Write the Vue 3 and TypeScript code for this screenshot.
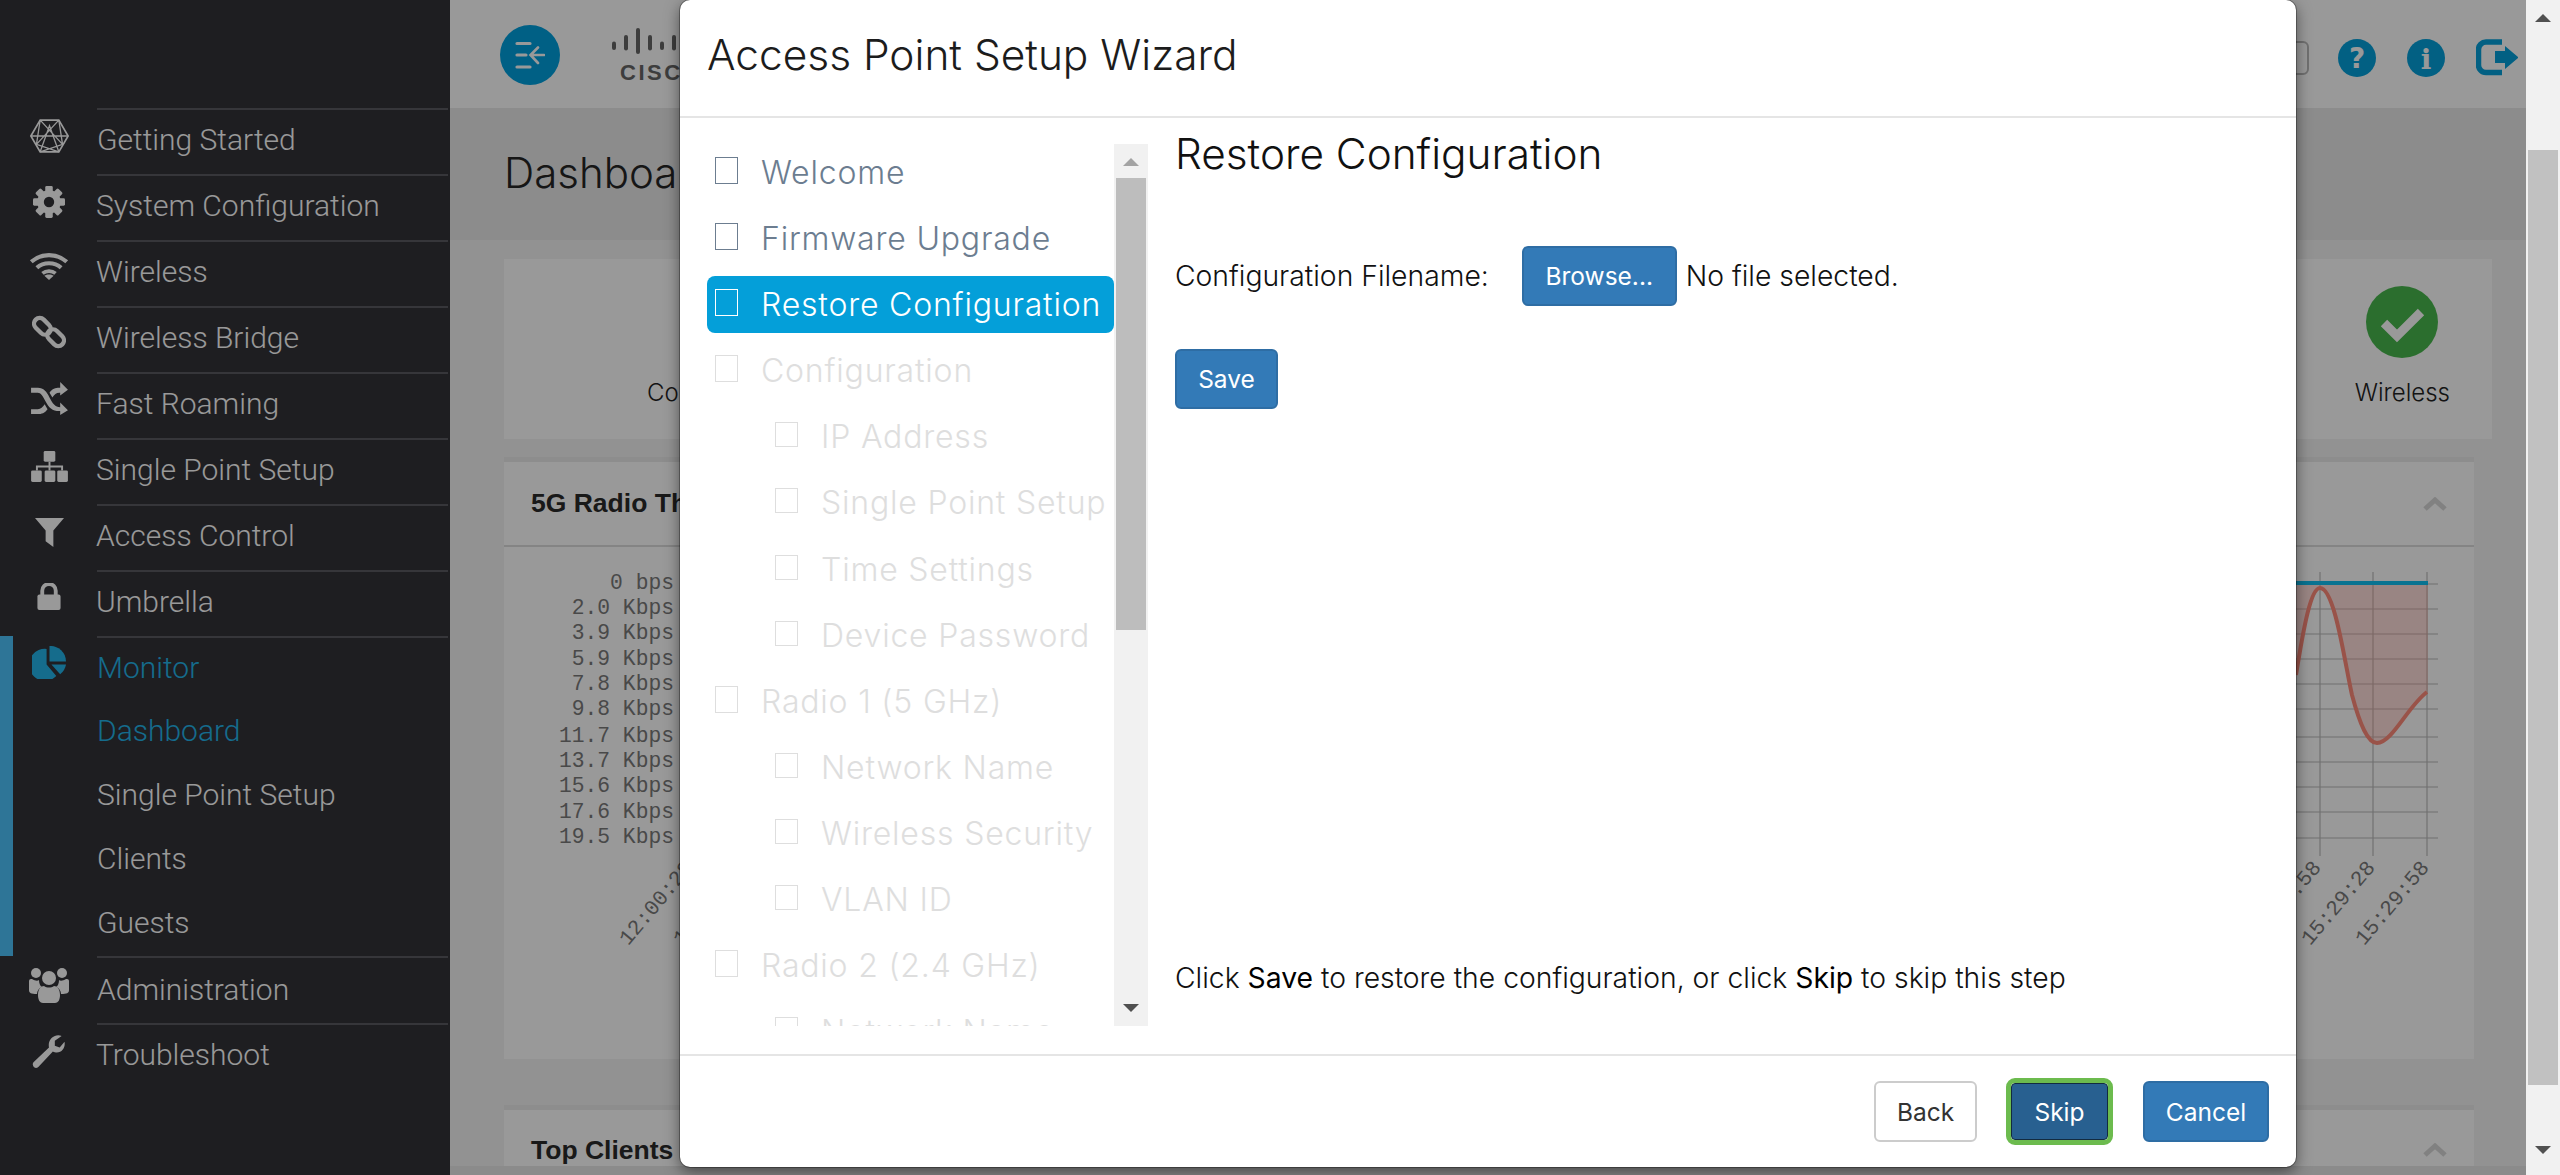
<script setup lang="ts">
const steps: { label: string; state: string; child?: boolean }[] = [
  { label: 'Welcome', state: 'done' },
  { label: 'Firmware Upgrade', state: 'done' },
  { label: 'Restore Configuration', state: 'active' },
  { label: 'Configuration', state: 'off' },
  { label: 'IP Address', state: 'off', child: true },
  { label: 'Single Point Setup', state: 'off', child: true },
  { label: 'Time Settings', state: 'off', child: true },
  { label: 'Device Password', state: 'off', child: true },
  { label: 'Radio 1 (5 GHz)', state: 'off' },
  { label: 'Network Name', state: 'off', child: true },
  { label: 'Wireless Security', state: 'off', child: true },
  { label: 'VLAN ID', state: 'off', child: true },
  { label: 'Radio 2 (2.4 GHz)', state: 'off' },
  { label: 'Network Name', state: 'off', child: true },
]
const subItems = [
  { label: 'Dashboard', active: true },
  { label: 'Single Point Setup', active: false },
  { label: 'Clients', active: false },
  { label: 'Guests', active: false },
]
const yLabels = [
  ['0 bps', 589], ['2.0 Kbps', 614], ['3.9 Kbps', 639], ['5.9 Kbps', 665], ['7.8 Kbps', 690], ['9.8 Kbps', 715],
  ['11.7 Kbps', 742], ['13.7 Kbps', 767], ['15.6 Kbps', 792], ['17.6 Kbps', 818], ['19.5 Kbps', 843],
] as [string, number][]
const hLines = [584, 609, 634, 659, 684, 709, 737, 762, 787, 812, 838]
const vLines = [2320, 2373, 2427]
const xLabels = [
  ['12:00:28', 694], ['12:00:58', 748], ['15:28:58', 2322], ['15:29:28', 2376], ['15:29:58', 2430],
] as [string, number][]
</script>

<template>
  <div class="app">
    <aside class="sidebar">
      <div class="nav-row">
        <span class="nav-icon">
          <svg width="41" height="36" viewBox="0 0 44 38" fill="none" stroke="#fff" stroke-width="1.4">
            <path d="M2 19 12 2h20l10 17-10 17H12z" stroke-width="1.8" />
            <path d="M12 2 36 28M32 2 8 28M2 19h40M12 36 22 8l10 28M12 2l-4 26 24 8M32 2l4 26-24 8" />
          </svg>
        </span>
        <span class="nav-text">Getting Started</span>
      </div>
      <div class="nav-row">
        <span class="nav-icon">
          <svg width="32" height="32" viewBox="0 0 34 34" fill="#fff">
            <g>
              <rect x="13" y="0" width="8" height="34" rx="1.5" />
              <rect x="13" y="0" width="8" height="34" rx="1.5" transform="rotate(45 17 17)" />
              <rect x="13" y="0" width="8" height="34" rx="1.5" transform="rotate(90 17 17)" />
              <rect x="13" y="0" width="8" height="34" rx="1.5" transform="rotate(135 17 17)" />
            </g>
            <circle cx="17" cy="17" r="12.5" />
            <circle cx="17" cy="17" r="5.5" fill="#323238" />
          </svg>
        </span>
        <span class="nav-text">System Configuration</span>
      </div>
      <div class="nav-row">
        <span class="nav-icon nudge-up">
          <svg width="40" height="28" viewBox="0 0 42 30" fill="none" stroke="#fff" stroke-width="4.4">
            <path d="M2 10.5C12.500 1 29.500 1 40 10.500" />
            <path d="M8 17C15 10.500 27 10.500 34 17" />
            <path d="M14 23C18 19.500 24 19.500 28 23" stroke-width="4" />
            <path d="M21 30l-5-4.500c3-2 7-2 10 0z" fill="#fff" stroke="none" />
          </svg>
        </span>
        <span class="nav-text">Wireless</span>
      </div>
      <div class="nav-row">
        <span class="nav-icon nudge-up">
          <svg width="34" height="34" viewBox="0 0 36 36" fill="none" stroke="#fff" stroke-width="4.6">
            <rect x="1" y="6" width="20" height="12" rx="6" transform="rotate(45 11 12)" />
            <rect x="15" y="18" width="20" height="12" rx="6" transform="rotate(45 25 24)" />
          </svg>
        </span>
        <span class="nav-text">Wireless Bridge</span>
      </div>
      <div class="nav-row">
        <span class="nav-icon nudge-up">
          <svg width="37" height="33" viewBox="0 0 38 34" fill="#fff">
            <path d="M0 6h7c6 0 9 4 12 10s6 10 11 10v-5l8 8-8 5v-4h-1c-7 0-11-4-14-10S10 11 7 11H0z" />
            <path d="M0 28h7c3 0 5-2 7-5l3 5c-3 4-6 5-10 5H0z" />
            <path d="M30 0l8 8-8 6V11h-1c-3 0-5 2-7 5l-3-5c3-4 6-5 10-5h1z" />
          </svg>
        </span>
        <span class="nav-text">Fast Roaming</span>
      </div>
      <div class="nav-row">
        <span class="nav-icon">
          <svg width="37" height="31" viewBox="0 0 38 32" fill="#fff">
            <rect x="13" y="0" width="12" height="11" rx="1.500" />
            <rect x="0" y="20" width="11" height="12" rx="1.500" />
            <rect x="14" y="20" width="11" height="12" rx="1.500" />
            <rect x="27" y="20" width="11" height="12" rx="1.500" />
            <path d="M18 11h2v4h13v5h-2v-3H20v3h-2v-3H7v3H5v-5h13z" />
          </svg>
        </span>
        <span class="nav-text">Single Point Setup</span>
      </div>
      <div class="nav-row">
        <span class="nav-icon">
          <svg width="29" height="29" viewBox="0 0 30 30" fill="#fff"><path d="M0 0h30L19 13v17l-8-6V13z" /></svg>
        </span>
        <span class="nav-text">Access Control</span>
      </div>
      <div class="nav-row">
        <span class="nav-icon nudge-up">
          <svg width="24" height="27" viewBox="0 0 24 28" fill="none">
            <rect x="0" y="12" width="24" height="16" rx="2" fill="#fff" />
            <path d="M5 13V8a7 7 0 0 1 14 0v5" stroke="#fff" stroke-width="4" />
          </svg>
        </span>
        <span class="nav-text">Umbrella</span>
      </div>
      <div class="nav-group">
        <div class="nav-row monitor">
          <span class="nav-icon">
            <svg width="35" height="33" viewBox="0 0 36 34" fill="#23b5ea">
              <path d="M15 3v16l10 12A16.500 16.500 0 1 1 15 3z" />
              <path d="M18 0a16 16 0 0 1 17 16H18z" />
              <path d="M20 19h15a16 16 0 0 1-6 10z" />
            </svg>
          </span>
          <span class="label-flat">Monitor</span>
        </div>
        <div v-for="s in subItems" :key="s.label" class="sub-row" :class="{ current: s.active }">{{ s.label }}</div>
      </div>
      <div class="nav-row admin">
        <span class="nav-icon">
          <svg width="40" height="36" viewBox="0 0 40 36" fill="#fff">
            <circle cx="7" cy="6" r="5" /><circle cx="33" cy="6" r="5" /><circle cx="20" cy="11" r="7" />
            <path d="M0 14c0-2 2-2 3-2 3 2 6 2 7 1 0 3 1 6 3 7-3 1-5 4-5 7-6 0-8-1-8-4zM40 14c0-2-2-2-3-2-3 2-6 2-7 1 0 3-1 6-3 7 3 1 5 4 5 7 6 0 8-1 8-4z" />
            <path d="M9 28c0-6 3-9 6-9 3 2 7 2 10 0 3 0 6 3 6 9 0 5-2 8-5 8H14c-3 0-5-3-5-8z" />
          </svg>
        </span>
        <span class="label-flat">Administration</span>
      </div>
      <div class="nav-row">
        <span class="nav-icon">
          <svg width="34" height="33" viewBox="0 0 34 34" fill="#fff">
            <path d="M33 7c1 5-2 11-8 11-1 0-3 0-4-1L6 33c-2 1.500-4 1-5-.500s-1-3 0-4.500L17 13c-1-5 1-10 6-12 2-1 5-1 7 0l-7 5v5l5 2z" />
          </svg>
        </span>
        <span class="nav-text">Troubleshoot</span>
      </div>
    </aside>

    <main class="main">
      <header class="topbar">
        <button class="menu-btn" aria-label="Collapse menu">
          <svg width="30" height="30" viewBox="0 0 30 30" fill="none" stroke="#fff" stroke-width="3.200" stroke-linecap="round">
            <path d="M2 3.500h13M2 15h9M2 27h13" />
            <path d="M16 15h13M23 7.500 15.500 15l7.500 8" stroke-width="2.600" />
          </svg>
        </button>
        <div class="logo">
          <svg width="100" height="26" viewBox="0 0 100 26" fill="#666">
            <rect x="0" y="13.600" width="4" height="8.400" rx="2" /><rect x="12" y="7" width="4" height="15.600" rx="2" />
            <rect x="24" y="0" width="4" height="26" rx="2" /><rect x="36" y="7" width="4" height="15.600" rx="2" />
            <rect x="48" y="13.600" width="4" height="8.400" rx="2" /><rect x="60" y="7" width="4" height="15.600" rx="2" />
            <rect x="72" y="0" width="4" height="26" rx="2" />
          </svg>
          <span class="logo-word">CISCO</span>
        </div>
        <div class="top-actions">
          <span class="search-stub"></span>
          <svg width="38" height="38" viewBox="0 0 38 38"><circle cx="19" cy="19" r="19" fill="#04a0da" /><text x="19" y="29" text-anchor="middle" class="glyph">?</text></svg>
          <svg width="38" height="38" viewBox="0 0 38 38"><circle cx="19" cy="19" r="19" fill="#04a0da" /><text x="19" y="30" text-anchor="middle" class="glyph serif">i</text></svg>
          <svg width="42" height="37" viewBox="0 0 42 37" fill="none">
            <path d="M26 3H10a7.500 7.500 0 0 0-7.500 7.500v15A7.500 7.500 0 0 0 10 33.500h16" stroke="#04a0da" stroke-width="5.500" />
            <path d="M19 12h10V7l13.500 11.500L29 30v-6H19z" fill="#04a0da" />
          </svg>
        </div>
      </header>

      <section class="title-band"><h1>Dashboard</h1></section>

      <section class="status-card">
        <div class="status"><span class="ok"><svg width="72" height="72" viewBox="0 0 72 72"><path d="M18 37l13 13 24-24" fill="none" stroke="#fff" stroke-width="9" /></svg></span><span>Connectivity</span></div>
        <div class="status"><span class="ok"><svg width="72" height="72" viewBox="0 0 72 72"><path d="M18 37l13 13 24-24" fill="none" stroke="#fff" stroke-width="9" /></svg></span><span>Wireless</span></div>
      </section>

      <section class="panel chart-panel">
        <div class="panel-head">
          <span>5G Radio Throughput</span>
          <svg width="24" height="14" viewBox="0 0 24 14" fill="none" stroke="#d8d8d8" stroke-width="5"><path d="M2 12 12 3l10 9" /></svg>
        </div>
        <svg class="chart" width="1970" height="512" viewBox="504 547 1970 512">
          <g stroke="#bcbcbc" stroke-width="1.200">
            <line v-for="y in hLines" :key="y" x1="686" x2="2438" :y1="y" :y2="y" />
            <line v-for="x in vLines" :key="x" :x1="x" :x2="x" y1="572" y2="856" />
          </g>
          <path d="M2240 583H2428V692C2408 706 2392 743 2377 743C2368 743 2360 725 2352 695C2345 665 2335 588 2320 588C2311 588 2304 625 2296 675Z" fill="#ff8a7a" fill-opacity=".28" />
          <path d="M2296 675C2304 625 2311 588 2320 588C2335 588 2345 665 2352 695C2360 725 2368 743 2377 743C2392 743 2408 706 2427 692" fill="none" stroke="#ff8a7a" stroke-width="4" />
          <line x1="686" x2="2428" y1="583" y2="583" stroke="#0fc0f2" stroke-width="4" />
          <text v-for="l in yLabels" :key="l[0]" x="674" :y="l[1]" text-anchor="end" class="axis">{{ l[0] }}</text>
          <text v-for="l in xLabels" :key="l[0]" :x="l[1]" y="868" class="axis" text-anchor="end" :transform="`rotate(-50 ${l[1]} 868)`">{{ l[0] }}</text>
        </svg>
      </section>

      <section class="panel clients-panel">
        <div class="panel-head">
          <span>Top Clients</span>
          <svg width="24" height="14" viewBox="0 0 24 14" fill="none" stroke="#d8d8d8" stroke-width="5"><path d="M2 12 12 3l10 9" /></svg>
        </div>
      </section>
      <div class="page-foot"></div>
    </main>

    <div class="page-scroll">
      <span class="arrow up dark"></span>
      <span class="page-thumb"></span>
      <span class="arrow down dark"></span>
    </div>

    <div class="backdrop"></div>

    <div class="modal">
      <header class="modal-head"><h2>Access Point Setup Wizard</h2></header>
      <div class="modal-body">
        <div class="wizard-nav">
          <ul class="steps">
            <li v-for="(s, i) in steps" :key="i" class="step" :class="[s.state, { child: s.child }]">
              <span class="box"></span><span>{{ s.label }}</span>
            </li>
          </ul>
          <div class="list-scroll">
            <span class="arrow up light"></span>
            <span class="list-thumb"></span>
            <span class="arrow down dark"></span>
          </div>
        </div>
        <div class="content">
          <h3>Restore Configuration</h3>
          <div class="file-row">
            <span class="file-label">Configuration Filename:</span>
            <button class="btn browse">Browse...</button>
            <span class="file-name">No file selected.</span>
          </div>
          <button class="btn save">Save</button>
          <p class="hint">Click <b>Save</b> to restore the configuration, or click <b>Skip</b> to skip this step</p>
        </div>
      </div>
      <footer class="modal-foot">
        <button class="btn back">Back</button>
        <button class="btn skip">Skip</button>
        <button class="btn cancel">Cancel</button>
      </footer>
    </div>
  </div>
</template>

<style scoped>
.app { position: relative; display: flex; width: 2560px; height: 1175px; overflow: hidden; font-family: Inter, "Liberation Sans", sans-serif; background: #f3f3f3; }

.sidebar { flex: 0 0 450px; background: #323238; padding-top: 108px; color: #fff; font-family: Roboto, sans-serif; font-weight: 300; font-size: 30px; box-sizing: border-box; }
.nav-row { position: relative; display: flex; align-items: center; height: 66px; }
.nav-row::after { content: ""; position: absolute; left: 97px; right: 2px; top: 0; height: 2px; background: #5a5a61; }
.nav-icon { flex: 0 0 40px; margin: 0 28px 0 29px; display: flex; align-items: center; justify-content: center; height: 100%; }
.nav-icon svg { flex: none; margin-top: -10px; }
.nudge-up svg { margin-top: -14px; }
.nav-text { margin-top: -4px; margin-left: -1px; }
.nav-group { position: relative; height: 320px; }
.nav-group::before { content: ""; position: absolute; left: 0; top: 0; bottom: 0; width: 13px; background: #4ec4fc; }
.monitor { height: 62px; color: #23b5ea; }
.sub-row { height: 64px; display: flex; align-items: center; padding-left: 97px; }
.sub-row.current { color: #23b5ea; }
.admin { height: 67px; }

.main { flex: 1; min-width: 0; display: flex; flex-direction: column; background: #f3f3f3; }
.topbar { flex: 0 0 108px; display: flex; align-items: center; background: #fff; padding: 0 8px 0 50px; }
.menu-btn { width: 60px; height: 60px; border-radius: 50%; border: 0; background: #00a0de; display: flex; align-items: center; justify-content: center; padding: 0; margin-top: 2px; }
.logo { margin-left: 52px; align-self: flex-start; margin-top: 28px; display: flex; flex-direction: column; gap: 11px; }
.logo svg { display: block; }
.logo-word { font: 700 22px/15px "Liberation Sans", sans-serif; color: #666; margin-left: 8px; letter-spacing: 2.500px; }
.top-actions { margin-left: auto; margin-top: 7px; display: flex; align-items: center; gap: 31px; }
.search-stub { width: 60px; height: 30px; border: 2px solid #bbb; border-radius: 6px; margin-right: -2px; }
.glyph { font: 700 28px "DejaVu Sans", sans-serif; fill: #fff; }
.serif { font-family: "DejaVu Serif", serif; }

.title-band { flex: 0 0 132px; padding-left: 54px; background: #e9e9e9; }
.title-band h1 { margin: 40px 0 0; font-size: 42px; font-weight: 300; line-height: 50px; color: #262626; }

.status-card { flex: 0 0 180px; margin: 19px 34px 0 54px; background: #fff; display: flex; justify-content: space-between; padding: 0 42px 0 143px; font-size: 24px; font-weight: 300; color: #222; }
.status { display: flex; flex-direction: column; align-items: center; padding-top: 27px; gap: 18px; line-height: 34px; }
.ok { width: 72px; height: 72px; border-radius: 50%; background: #49b84e; display: block; }
.ok svg { display: block; }

.panel { margin: 0 52px 0 54px; background: #fff; border-top: 5px solid #ebebeb; box-sizing: border-box; }
.chart-panel { flex: 0 0 602px; margin-top: 18px; position: relative; }
.clients-panel { flex: 0 0 61px; margin-top: 46px; overflow: hidden; }
.panel-head { height: 85px; padding: 0 27px; display: flex; align-items: center; justify-content: space-between; font: 700 26.500px "Liberation Sans", sans-serif; color: #2a2a2a; border-bottom: 2px solid #ddd; box-sizing: border-box; }
.clients-panel .panel-head { border: 0; height: 80px; }
.chart { display: block; }
.axis { font: 21.300px "Liberation Mono", monospace; fill: #7a7a7a; }
.page-foot { flex: 1; background: #e8e8e8; }

.page-scroll { flex: 0 0 34px; position: relative; z-index: 3; background: #f1f1f1; display: flex; flex-direction: column; align-items: center; }
.page-thumb { position: absolute; left: 2px; right: 2px; top: 150px; height: 935px; background: #c1c1c1; }
.arrow { width: 0; height: 0; border-left: 8px solid transparent; border-right: 8px solid transparent; }
.arrow.up { border-bottom: 8px solid #505050; }
.arrow.down { border-top: 8px solid #505050; margin-top: auto; }
.arrow.up.light { border-bottom-color: #a3a3a3; }
.page-scroll .arrow.up { margin-top: 14px; }
.page-scroll .arrow.down { margin-bottom: 21px; }

.backdrop { position: absolute; left: 0; top: 0; right: 34px; bottom: 0; background: rgba(0, 0, 0, .4); z-index: 1; }

.modal { position: absolute; left: 680px; top: 0; width: 1616px; height: 1167px; z-index: 2; background: #fff; border-radius: 10px; box-shadow: 0 5px 15px rgba(0, 0, 0, .5); display: flex; flex-direction: column; outline: 1px solid rgba(0, 0, 0, .3); }
.modal-head { flex: 0 0 118px; border-bottom: 2px solid #e5e5e5; box-sizing: border-box; padding-left: 27px; display: flex; align-items: center; }
.modal-head h2 { margin: 0 0 8px; font-size: 42.400px; font-weight: 300; color: #1c1c1c; }
.modal-body { flex: 1; min-height: 0; display: flex; }
.wizard-nav { flex: 0 0 441px; margin: 26px 0 28px 27px; display: flex; overflow: hidden; }
.steps { list-style: none; margin: 0; padding: 0; width: 407px; display: flex; flex-direction: column; gap: 9.100px; overflow: hidden; font-size: 32px; font-weight: 300; letter-spacing: .8px; }
.step { flex: 0 0 57px; display: flex; align-items: center; padding-left: 8px; border-radius: 8px; box-sizing: border-box; white-space: nowrap; }
.step.child { padding-left: 68px; }
.box { flex: 0 0 23px; height: 27px; border: 1.500px solid currentColor; box-sizing: border-box; margin-right: 23px; margin-top: -4px; }
.child .box { height: 25px; }
.step.done { color: #6c7d90; }
.step.active { background: #049fd9; color: #fff; }
.step.off { color: #dedede; }
.list-scroll { flex: 0 0 34px; position: relative; background: #f1f1f1; display: flex; flex-direction: column; align-items: center; padding: 14px 0 14px; box-sizing: border-box; }
.list-thumb { position: absolute; left: 2px; right: 2px; top: 34px; height: 452px; background: #bdbdbd; }
.content { flex: 1; padding: 8px 27px 56px 27px; display: flex; flex-direction: column; align-items: flex-start; font-size: 28.300px; font-weight: 300; color: #111; }
.content h3 { margin: 0; font-size: 42.300px; font-weight: 300; line-height: 56px; }
.file-row { display: flex; align-items: center; margin-top: 64px; }
.file-label { margin-right: 33px; }
.file-name { margin-left: 9px; }
.btn { font: 400 24.500px Inter, sans-serif; border-radius: 6px; border: 2px solid #2e6da4; background: #337ab7; color: #fff; height: 61px; padding: 0; }
.browse { width: 155px; height: 60px; }
.save { width: 103px; height: 60px; margin-top: 43px; }
.hint { margin: auto 0 0; line-height: 40px; }
.hint b { font-weight: 400; color: #000; }
.modal-foot { flex: 0 0 113px; border-top: 2px solid #e5e5e5; box-sizing: border-box; display: flex; align-items: flex-start; padding: 25px 27px 0 0; justify-content: flex-end; }
.back { width: 103px; background: #fff; border-color: #ccc; color: #333; }
.skip { width: 97px; height: 57px; margin: 2px 35px 0 34px; background: #286090; border: 1px solid #122b40; outline: 5px solid #6cbb4e; border-radius: 4px; }
.cancel { width: 126px; }
</style>
